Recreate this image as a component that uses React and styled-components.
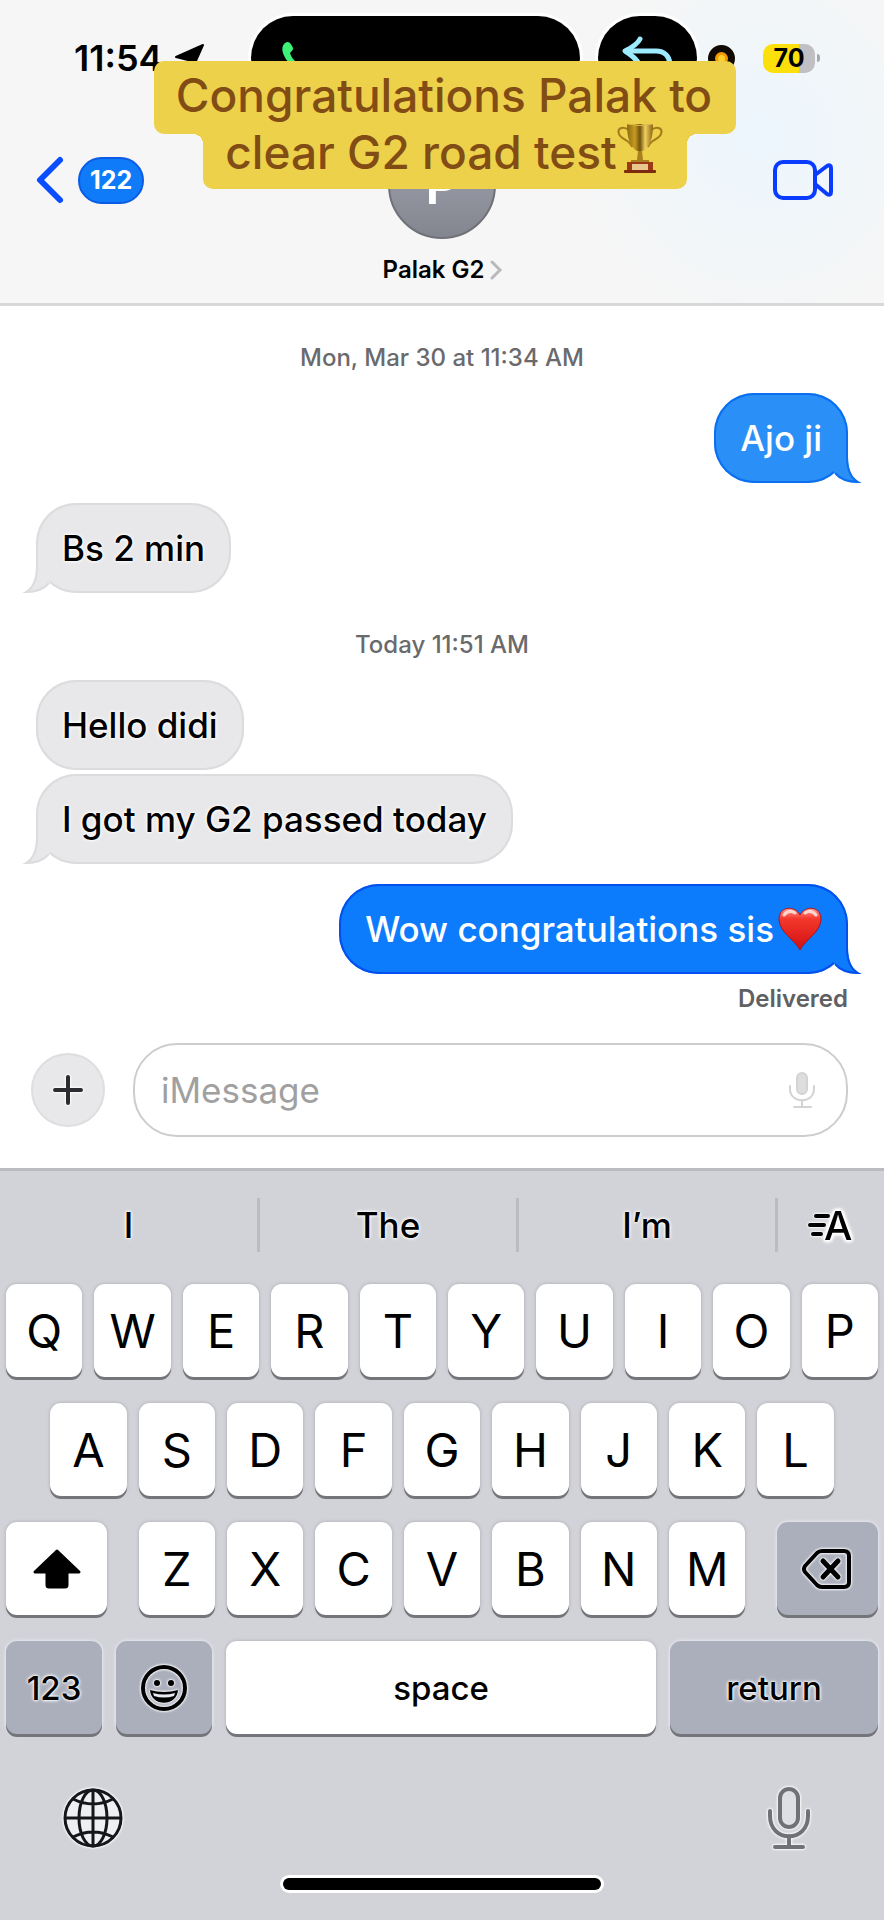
import React, { useState } from "react";
import styled, { createGlobalStyle, css } from "styled-components";

const GlobalStyle = createGlobalStyle`
  * {
    box-sizing: border-box;
  }

  body {
    margin: 0;
    background: #d2d3d8;
    font-family: Inter, "Liberation Sans", sans-serif;
    color: #000;
  }

  button,
  input {
    font-family: inherit;
    color: inherit;
  }

  svg {
    display: block;
    flex-shrink: 0;
    overflow: visible;
  }
`;

const halo = css`
  text-shadow: 0 0 2px #fff, 0 0 3px #fff, 0 0 4px #fff;
`;

const iconHalo = css`
  filter: drop-shadow(0 0 1px #fff) drop-shadow(0 0 1px #fff);
`;

const Phone = styled.div`
  position: relative;
  display: flex;
  flex-direction: column;
  min-height: 100vh;
  background: #fff;
`;

const Header = styled.header`
  background: radial-gradient(circle at 86% 45%, #ecf6fd 0, #f6f6f6 190px);
  border-bottom: 3px solid #d8d8d8;
  padding-bottom: 18px;
`;

const StatusBar = styled.div`
  display: flex;
  align-items: center;
  height: 116px;
  padding-right: 64px;
`;

const Clock = styled.div`
  flex: 1;
  display: flex;
  align-items: center;
  gap: 12px;
  padding-left: 74px;
  font-size: 36px;
  font-weight: 600;
`;

const Island = styled.div`
  display: flex;
  align-items: center;
  width: ${(props) => props.$width};
  height: 84px;
  margin-right: ${(props) => props.$gap};
  padding-left: 30px;
  border-radius: 42px;
  background: #000;
  box-shadow: 0 0 0 3px #fff;
`;

const RecordDot = styled.div`
  width: 27px;
  height: 27px;
  margin-right: 28px;
  border: 7px solid #100a02;
  border-radius: 50%;
  background: radial-gradient(circle, #ffd02a 0 3px, #f39a05 4px);
`;

const Battery = styled.div`
  display: flex;
  align-items: center;
  justify-content: center;
  width: 52px;
  height: 29px;
  border-radius: 10px;
  background: linear-gradient(to right, #fce00c 0 70%, #bfbfc4 70%);
  font-size: 25px;
  font-weight: 700;
`;

const BatteryCap = styled.div`
  width: 3px;
  height: 8px;
  margin-left: 2px;
  border-radius: 0 3px 3px 0;
  background: #a9a9ad;
`;

const NavBar = styled.nav`
  display: grid;
  grid-template-columns: 1fr auto 1fr;
  align-items: start;
  padding-top: 15px;
`;

const NavButton = styled.button`
  display: flex;
  align-items: center;
  justify-self: ${(props) => props.$side};
  gap: 14px;
  height: 48px;
  margin-top: 25px;
  padding: 0 51px 0 36px;
  border: none;
  background: none;
  cursor: pointer;
`;

const Unread = styled.span`
  display: flex;
  align-items: center;
  height: 47px;
  padding: 0 10px;
  border: 2px solid #0a5ce6;
  border-radius: 24px;
  background: #0f7bf8;
  color: #fff;
  font-size: 25px;
  font-weight: 700;
`;

const Contact = styled.button`
  display: flex;
  flex-direction: column;
  align-items: center;
  gap: 16px;
  padding: 0;
  border: none;
  background: none;
  cursor: pointer;
`;

const Avatar = styled.span`
  display: flex;
  align-items: center;
  justify-content: center;
  width: 108px;
  height: 108px;
  border: 2px solid #6f7078;
  border-radius: 50%;
  background: linear-gradient(#a4a7b2, #83868f);
  color: #fff;
  font-size: 52px;
  font-weight: 600;
`;

const ContactName = styled.span`
  display: flex;
  align-items: center;
  gap: 7px;
  font-size: 24px;
  font-weight: 600;
  line-height: 30px;
`;

const Banner = styled.div`
  position: absolute;
  top: 61px;
  left: 0;
  right: 0;
  display: flex;
  flex-direction: column;
  align-items: center;
  padding-left: 6px;
  color: #824c15;
  font-size: 46px;
  font-weight: 500;
  line-height: 58px;
  white-space: nowrap;
`;

const BannerTop = styled.div`
  padding: 5px 24px 10px 22px;
  border-radius: 10px;
  background: #edd14a;
`;

const BannerBottom = styled.div`
  position: relative;
  display: flex;
  margin-top: -11px;
  padding: 0 24px 8px 22px;
  border-radius: 0 0 10px 10px;
  background: #edd14a;

  &::before,
  &::after {
    content: "";
    position: absolute;
    top: 11px;
    width: 10px;
    height: 10px;
  }

  &::before {
    right: 100%;
    background: radial-gradient(circle at 0 100%, transparent 10px, #edd14a 10px);
  }

  &::after {
    left: 100%;
    background: radial-gradient(circle at 100% 100%, transparent 10px, #edd14a 10px);
  }
`;

const Messages = styled.main`
  flex: 1;
  display: flex;
  flex-direction: column;
  padding: 0 36px 29px;
`;

const Timestamp = styled.time`
  margin-top: 37px;
  text-align: center;
  color: #6a6a6c;
  font-size: 24px;
  font-weight: 500;
  line-height: 30px;
`;

const tones = {
  grey: { fill: "#e8e8ea", edge: "#dcdcdf" },
  sky: { fill: "#2b8ff8", edge: "#0b6ff0" },
  blue: { fill: "#0c7cfd", edge: "#0350ee" },
};

const Bubble = styled.div`
  position: relative;
  display: flex;
  align-items: center;
  gap: 4px;
  align-self: ${(props) => (props.$tone === "grey" ? "flex-start" : "flex-end")};
  margin-top: ${(props) => (props.$joined ? "4px" : "20px")};
  padding: 22px 26px;
  border-radius: 40px;
  background: ${(props) => tones[props.$tone].fill};
  box-shadow: inset 0 0 0 2px ${(props) => tones[props.$tone].edge};
  color: ${(props) => (props.$tone === "grey" ? "#000" : "#fff")};
  font-size: 35px;
  font-weight: 450;
  line-height: 46px;
  ${(props) => props.$tone === "grey" && halo}
`;

const Tail = styled.svg`
  position: absolute;
  bottom: 0;
  ${(props) =>
    props.$tone === "grey"
      ? "left: -11px; transform: scaleX(-1);"
      : "right: -11px;"}
`;

const Receipt = styled.div`
  margin-top: 10px;
  text-align: right;
  color: #606062;
  font-size: 24px;
  font-weight: 600;
  line-height: 30px;
`;

const Composer = styled.form`
  display: flex;
  align-items: center;
  gap: 28px;
  padding: 0 36px 31px 31px;
`;

const PlusButton = styled.button`
  display: flex;
  align-items: center;
  justify-content: center;
  width: 74px;
  height: 74px;
  padding: 0;
  border: 2px solid #dedee0;
  border-radius: 50%;
  background: #e8e8ea;
  cursor: pointer;

  svg {
    ${iconHalo}
  }
`;

const Field = styled.label`
  flex: 1;
  display: flex;
  align-items: center;
  height: 94px;
  padding: 0 31px 0 26px;
  border: 2px solid #cdcdcd;
  border-radius: 44px;
`;

const MessageInput = styled.input`
  flex: 1;
  min-width: 0;
  padding: 0;
  border: none;
  outline: none;
  background: transparent;
  font-size: 35px;

  &::placeholder {
    color: #a0a0a0;
    opacity: 1;
  }
`;

const Keyboard = styled.section`
  background: #d2d3d8;
  border-top: 3px solid #babbbf;
`;

const Suggestions = styled.div`
  display: grid;
  grid-template-columns: 257fr 259fr 259fr 109fr;
  align-items: center;
  height: 107px;
`;

const Suggestion = styled.button`
  display: flex;
  align-items: center;
  justify-content: center;
  height: 54px;
  padding: 0;
  border: none;
  background: none;
  font-size: 35px;
  font-weight: 500;
  cursor: pointer;
  ${halo}

  & + & {
    border-left: 3px solid #bbbcc1;
  }

  svg {
    ${iconHalo}
  }
`;

const Keys = styled.div`
  display: flex;
  flex-direction: column;
  gap: 26px;
  padding: 6px 6px 0;
`;

const KeyRow = styled.div`
  display: flex;
  justify-content: ${(props) => (props.$spread ? "space-between" : "center")};
  gap: ${(props) => (props.$wide ? "14px" : "12px")};
`;

const LetterGroup = styled.div`
  display: flex;
  justify-content: center;
  gap: 12px;
  width: calc((100% - 108px) * 0.7 + 72px);
`;

const Key = styled.button`
  display: flex;
  align-items: center;
  justify-content: center;
  flex: ${(props) => props.$grow || 1} 1 0;
  height: 93px;
  padding: 0;
  border: none;
  border-radius: 11px;
  background: ${(props) => (props.$dark ? "#abafbc" : "#fff")};
  box-shadow: 0 3px 0 #74757a, 0 0 3px 1px ${(props) => (props.$dark ? "#e6e6f0" : "#b9bac2")};
  font-size: ${(props) => (props.$word ? "33px" : "47px")};
  font-weight: ${(props) => (props.$word ? 500 : 400)};
  cursor: pointer;
  ${(props) => props.$dark && halo}

  svg {
    ${(props) => props.$dark && iconHalo}
  }
`;

const LetterKey = styled(Key)`
  flex: 0 0 calc((100% - 108px) / 10);

  ${LetterGroup} & {
    flex: 1 1 0;
  }
`;

const SideKey = styled(Key)`
  flex: 0 0 101px;
`;

const KeyboardFooter = styled.footer`
  display: flex;
  align-items: center;
  justify-content: space-between;
  height: 62px;
  margin-top: 53px;
  padding: 0 74px 0 63px;
`;

const FooterButton = styled.button`
  padding: 0;
  border: none;
  background: none;
  cursor: pointer;

  svg {
    ${iconHalo}
  }
`;

const HomeIndicator = styled.div`
  width: 36%;
  height: 12px;
  margin: 29px auto 30px;
  border-radius: 6px;
  background: #000;
  box-shadow: 0 0 0 3px #fff;
`;

const LocationIcon = () => (
  <svg width="29" height="29" viewBox="0 0 29 29">
    <path d="M28 1 L16 28 L13 16 L1 13 Z" fill="#000" stroke="#000" strokeWidth="2" strokeLinejoin="round" />
  </svg>
);

const CallIcon = () => (
  <svg width="32" height="32" viewBox="0 0 32 32">
    <path
      d="M4 1 C7 -1 9 0 11 4 C13 7 12 8 9 11 C11 17 15 21 21 23 C24 20 25 19 28 21 C32 23 33 25 31 28 C27 33 20 32 12 25 C3 17 -2 6 4 1 Z"
      fill="#3df078"
    />
  </svg>
);

const ReplyIcon = () => (
  <svg width="50" height="42" viewBox="0 0 50 42" fill="none" stroke="#9eeaff" strokeWidth="5" strokeLinecap="round" strokeLinejoin="round">
    <path d="M12 2 Q9 8 -3 14 Q7 20 12 28" />
    <path d="M-2 14 H28 C46 14 46 38 30 38" />
  </svg>
);

const BackIcon = () => (
  <svg width="28" height="48" viewBox="0 0 28 48" fill="none" stroke="#0a4dff" strokeWidth="6" strokeLinecap="round" strokeLinejoin="round">
    <path d="M24 4 L4 24 L24 44" />
  </svg>
);

const VideoIcon = () => (
  <svg width="60" height="40" viewBox="0 0 60 40" fill="none" stroke="#0a3cff" strokeWidth="4" strokeLinejoin="round">
    <rect x="2" y="2" width="40" height="36" rx="8" />
    <path d="M42 15 L54 6 Q58 4 58 8 V32 Q58 36 54 34 L42 24" />
  </svg>
);

const ChevronIcon = () => (
  <svg width="10" height="18" viewBox="0 0 10 18" fill="none" stroke="#b9b9bb" strokeWidth="3" strokeLinecap="round">
    <path d="M1 1 L9 9 L1 17" />
  </svg>
);

const TrophyIcon = () => (
  <svg width="46" height="50" viewBox="0 0 46 50">
    <defs>
      <linearGradient id="cup" x1="0" x2="1">
        <stop offset="0" stopColor="#8a6a12" />
        <stop offset="0.3" stopColor="#c79a22" />
        <stop offset="0.5" stopColor="#6f520c" />
        <stop offset="0.7" stopColor="#f0d060" />
        <stop offset="1" stopColor="#8a6410" />
      </linearGradient>
    </defs>
    <path d="M12 7 C5 2 0 6 2 11 C4 17 12 16 15 24 M34 7 C41 2 46 6 44 11 C42 17 34 16 31 24" fill="none" stroke="#a47a1a" strokeWidth="2" />
    <path d="M10 1 H36 C36 15 33 24 26 28 H20 C13 24 10 15 10 1 Z" fill="url(#cup)" />
    <path d="M10 1 Q23 4 36 1" fill="none" stroke="#e2bd4d" strokeWidth="1" />
    <path d="M21 28 H25 L26 37 H32 V40 H14 V37 H20 Z" fill="#a9801f" />
    <rect x="10" y="39" width="26" height="8" fill="#9c3a16" />
    <rect x="15" y="41" width="16" height="6" fill="#e9c78f" />
    <rect x="7" y="47" width="32" height="3" rx="1" fill="#7d2b0e" />
  </svg>
);

const HeartIcon = () => (
  <svg width="44" height="44" viewBox="0 0 44 44">
    <defs>
      <linearGradient id="heart" x1="0" y1="0" x2="0" y2="1">
        <stop offset="0" stopColor="#ff9a8c" />
        <stop offset="0.25" stopColor="#f5382c" />
        <stop offset="1" stopColor="#cf0f12" />
      </linearGradient>
    </defs>
    <path d="M22 43 C17 33 1 25 1 12 C1 -1 17 -2 22 8 C27 -2 43 -1 43 12 C43 25 27 33 22 43 Z" fill="url(#heart)" stroke="#a8141c" strokeWidth="1" />
    <path d="M6 8 Q11 2 17 6 M27 6 Q33 2 38 8" fill="none" stroke="#ffd6cd" strokeWidth="3" strokeLinecap="round" />
  </svg>
);

const PlusIcon = () => (
  <svg width="30" height="30" viewBox="0 0 30 30" stroke="#2c2c30" strokeWidth="4" strokeLinecap="round">
    <path d="M15 2 V28 M2 15 H28" />
  </svg>
);

const SmallMicIcon = () => (
  <svg width="26" height="36" viewBox="0 0 26 36" fill="none" stroke="#d3d3d3" strokeWidth="2" strokeLinecap="round">
    <rect x="8" y="1" width="10" height="21" rx="5" fill="#dedede" />
    <path d="M1 14 V17 C1 32 25 32 25 17 V14 M13 28 V34 M5 35 H22" />
  </svg>
);

const FormatIcon = () => (
  <svg width="46" height="34" viewBox="0 0 46 34">
    <path d="M8 8 H20 M2 17 H16 M5 26 H13" stroke="#000" strokeWidth="4" strokeLinecap="round" />
    <text x="16" y="32" fontFamily="Inter, sans-serif" fontSize="40" fontWeight="500">A</text>
  </svg>
);

const ShiftIcon = () => (
  <svg width="48" height="40" viewBox="0 0 48 40">
    <path
      d="M24 2 L46 23 H34 V36 Q34 38 32 38 H16 Q14 38 14 36 V23 H2 Z"
      stroke="#000"
      strokeWidth="3"
      strokeLinejoin="round"
    />
  </svg>
);

const DeleteIcon = () => (
  <svg width="50" height="42" viewBox="0 0 50 42" fill="none" stroke="#000" strokeWidth="4" strokeLinecap="round" strokeLinejoin="round">
    <path d="M20 3 H42 Q47 3 47 8 V34 Q47 39 42 39 H20 Q17 39 15 37 L3 24 Q1 21 3 18 L15 5 Q17 3 20 3 Z" />
    <path d="M21 13 L36 29 M36 13 L21 29" strokeWidth="5" />
  </svg>
);

const EmojiIcon = () => (
  <svg width="46" height="46" viewBox="0 0 46 46">
    <circle cx="23" cy="23" r="21" fill="none" stroke="#000" strokeWidth="4" />
    <circle cx="16" cy="18" r="3" />
    <circle cx="30" cy="18" r="3" />
    <path d="M9 25 Q23 29 37 25 C36 42 10 42 9 25 Z" />
    <path d="M12 28 Q23 31 34 28 L33 31 Q23 34 13 31 Z" fill="#e9eaf2" />
  </svg>
);

const GlobeIcon = () => (
  <svg width="60" height="60" viewBox="0 0 60 60" fill="none" stroke="#15161a" strokeWidth="3">
    <circle cx="30" cy="30" r="28" fill="#eeeff2" />
    <ellipse cx="30" cy="30" rx="14" ry="28" />
    <path d="M30 2 V58 M2 30 H58 M10 11 Q30 21 50 11 M10 49 Q30 39 50 49" />
  </svg>
);

const DictationIcon = () => (
  <svg width="42" height="62" viewBox="0 0 42 62" fill="none" stroke="#707177" strokeWidth="4" strokeLinecap="round">
    <rect x="12" y="2" width="18" height="38" rx="9" fill="#dedfe4" />
    <path d="M2 24 V29 C2 56 40 56 40 29 V24 M21 49 V60 M7 60 H35" />
  </svg>
);

// x = 21 is the side of the bubble, the tip hangs 11px outside of it
const BubbleTail = ({ tone }) => (
  <Tail $tone={tone} width="32" height="46" viewBox="0 0 32 46" aria-hidden="true">
    <path d="M12 0 H21 V20 C21 33 25 41 32 46 C21 46 13 42 8 36 L0 26 Z" fill={tones[tone].fill} />
    <path d="M20 0 V20 C20 33 24 41 31 45 C21 45 13 42 8 36" fill="none" stroke={tones[tone].edge} strokeWidth="2" />
  </Tail>
);

const Message = ({ tone, tail = true, joined, children }) => (
  <Bubble $tone={tone} $joined={joined}>
    {tail && <BubbleTail tone={tone} />}
    {children}
  </Bubble>
);

const Letters = ({ letters, onType }) =>
  letters.split("").map((letter) => (
    <LetterKey key={letter} type="button" onClick={() => onType(letter)}>
      {letter}
    </LetterKey>
  ));

const App = () => {
  const [draft, setDraft] = useState("");

  const type = (text) => setDraft((value) => value + text);

  return (
    <>
      <GlobalStyle />
      <Phone>
        <Header>
          <StatusBar>
            <Clock>
              11:54 <LocationIcon />
            </Clock>
            <Island $width="329px" $gap="18px">
              <CallIcon />
            </Island>
            <Island $width="99px" $gap="11px">
              <ReplyIcon />
            </Island>
            <RecordDot />
            <Battery>70</Battery>
            <BatteryCap />
          </StatusBar>
          <NavBar>
            <NavButton type="button" $side="start" aria-label="Back">
              <BackIcon />
              <Unread>122</Unread>
            </NavButton>
            <Contact type="button">
              <Avatar>P</Avatar>
              <ContactName>
                Palak G2 <ChevronIcon />
              </ContactName>
            </Contact>
            <NavButton type="button" $side="end" aria-label="Video call">
              <VideoIcon />
            </NavButton>
          </NavBar>
        </Header>

        <Messages>
          <Timestamp>Mon, Mar 30 at 11:34 AM</Timestamp>
          <Message tone="sky">Ajo ji</Message>
          <Message tone="grey">Bs 2 min</Message>
          <Timestamp>Today 11:51 AM</Timestamp>
          <Message tone="grey" tail={false}>Hello didi</Message>
          <Message tone="grey" joined>I got my G2 passed today</Message>
          <Message tone="blue">
            Wow congratulations sis
            <HeartIcon />
          </Message>
          <Receipt>Delivered</Receipt>
        </Messages>

        <Composer onSubmit={(e) => e.preventDefault()}>
          <PlusButton type="button" aria-label="Add attachment">
            <PlusIcon />
          </PlusButton>
          <Field>
            <MessageInput
              type="text"
              aria-label="Message"
              placeholder="iMessage"
              value={draft}
              onChange={(e) => setDraft(e.target.value)}
            />
            <SmallMicIcon />
          </Field>
        </Composer>

        <Keyboard>
          <Suggestions>
            <Suggestion type="button" onClick={() => type("I ")}>I</Suggestion>
            <Suggestion type="button" onClick={() => type("The ")}>The</Suggestion>
            <Suggestion type="button" onClick={() => type("I’m ")}>I’m</Suggestion>
            <Suggestion type="button" aria-label="Text effects">
              <FormatIcon />
            </Suggestion>
          </Suggestions>
          <Keys>
            <KeyRow>
              <Letters letters="QWERTYUIOP" onType={type} />
            </KeyRow>
            <KeyRow>
              <Letters letters="ASDFGHJKL" onType={type} />
            </KeyRow>
            <KeyRow $spread>
              <SideKey type="button" aria-label="Shift">
                <ShiftIcon />
              </SideKey>
              <LetterGroup>
                <Letters letters="ZXCVBNM" onType={type} />
              </LetterGroup>
              <SideKey type="button" $dark aria-label="Delete" onClick={() => setDraft(draft.slice(0, -1))}>
                <DeleteIcon />
              </SideKey>
            </KeyRow>
            <KeyRow $wide>
              <Key type="button" $dark $word $grow={96}>123</Key>
              <Key type="button" $dark $grow={96} aria-label="Emoji">
                <EmojiIcon />
              </Key>
              <Key type="button" $word $grow={430} onClick={() => type(" ")}>space</Key>
              <Key type="button" $dark $word $grow={208}>return</Key>
            </KeyRow>
          </Keys>
          <KeyboardFooter>
            <FooterButton type="button" aria-label="Switch keyboard">
              <GlobeIcon />
            </FooterButton>
            <FooterButton type="button" aria-label="Dictate">
              <DictationIcon />
            </FooterButton>
          </KeyboardFooter>
          <HomeIndicator />
        </Keyboard>

        <Banner>
          <BannerTop>Congratulations Palak to</BannerTop>
          <BannerBottom>
            clear G2 road test
            <TrophyIcon />
          </BannerBottom>
        </Banner>
      </Phone>
    </>
  );
};

export default App;
